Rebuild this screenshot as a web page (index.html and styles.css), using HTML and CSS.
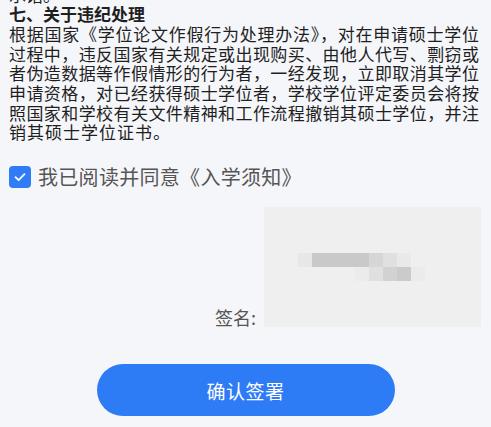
FILE: index.html
```html
<!DOCTYPE html>
<html lang="zh">
<head>
<meta charset="utf-8">
<link rel="stylesheet" href="styles.css">
</head>
<body>
<div class="page">
  <div class="article">
    <p class="line">承诺。</p>
    <p class="heading">七、关于违纪处理</p>
    <p class="para"><span class="jl">根据国家《学位论文作假行为处理办法》，对在申请硕士学位</span><span class="jl">过程中，违反国家有关规定或出现购买、由他人代写、剽窃或</span><span class="jl">者伪造数据等作假情形的行为者，一经发现，立即取消其学位</span><span class="jl">申请资格，对已经获得硕士学位者，学校学位评定委员会将按</span><span class="jl">照国家和学校有关文件精神和工作流程撤销其硕士学位，并注</span><span class="last">销其硕士学位证书。</span></p>
  </div>
  <label class="agree">
    <span class="check"><svg viewBox="0 0 22 22" width="22" height="22"><path d="M6.5 11.2 L9.6 14.2 L15.5 8.2" fill="none" stroke="#fff" stroke-width="1.8" stroke-linecap="round" stroke-linejoin="round"/></svg></span>
    <span class="agree-text">我已阅读并同意《入学须知》</span>
  </label>
  <div class="sign-row">
    <span class="sign-label">签名:</span>
    <div class="sign-box">
      <i class="px" style="left:34px;top:46px;background:#e7e7e7"></i>
      <i class="px" style="left:48px;top:46px;width:57px;background:#c9c9c9"></i>
      <i class="px" style="left:105px;top:46px;background:#d6d6d6"></i>
      <i class="px" style="left:119px;top:46px;background:#e0e0e0"></i>
      <i class="px" style="left:133px;top:46px;background:#e9e9e9"></i>
      <i class="px" style="left:91px;top:60px;background:#ebebeb"></i>
      <i class="px" style="left:105px;top:60px;background:#e0e0e0"></i>
      <i class="px" style="left:119px;top:60px;background:#d2d2d2"></i>
      <i class="px" style="left:133px;top:60px;background:#cbcbcb"></i>
      <i class="px" style="left:147px;top:60px;background:#ebebeb"></i>
    </div>
  </div>
  <div class="actions">
    <button class="confirm">确认签署</button>
  </div>
</div>
</body>
</html>
```
FILE: styles.css
```css
html, body {
  margin: 0;
  padding: 0;
  background: #f5f6fa;
}
body {
  width: 491px;
  height: 427px;
  overflow: hidden;
  font-family: "Noto Sans CJK SC", "Noto Sans", sans-serif;
}
.page {
  padding: 0 12px 0 9px;
}
.article {
  margin-top: -15.5px;
  color: #1f1f1f;
  font-size: 17px;
  line-height: 19.7px;
}
.article p {
  margin: 0;
}
.heading {
  font-weight: 700;
}
.jl {
  display: block;
  text-align: justify;
  text-align-last: justify;
  white-space: nowrap;
}
.last {
  display: block;
  letter-spacing: 1px;
}
.agree {
  display: flex;
  align-items: center;
  gap: 7px;
  margin-top: 24px;
  height: 22px;
}
.check {
  width: 22px;
  height: 22px;
  border-radius: 4px;
  background: #2f7cf6;
  display: flex;
}
.agree-text {
  font-size: 20px;
  letter-spacing: 0.3px;
  color: #555;
  line-height: 22px;
}
.sign-row {
  display: flex;
  justify-content: flex-end;
  align-items: flex-end;
  gap: 8px;
  margin-top: 19px;
  margin-right: -2px;
}
.sign-label {
  font-size: 18px;
  color: #555;
  line-height: 20px;
}
.sign-box {
  position: relative;
  width: 217px;
  height: 120px;
  background: #efefef;
}
.px {
  position: absolute;
  width: 14px;
  height: 14px;
}
.actions {
  display: flex;
  justify-content: center;
  margin-top: 37px;
  margin-left: -9px;
  margin-right: -12px;
}
.confirm {
  width: 298px;
  height: 52px;
  border: 0;
  border-radius: 26px;
  background: #2e7bf6;
  color: #fff;
  font-family: "Noto Sans CJK SC", "Noto Sans", sans-serif;
  font-size: 19px;
  letter-spacing: 0.5px;
}
```
